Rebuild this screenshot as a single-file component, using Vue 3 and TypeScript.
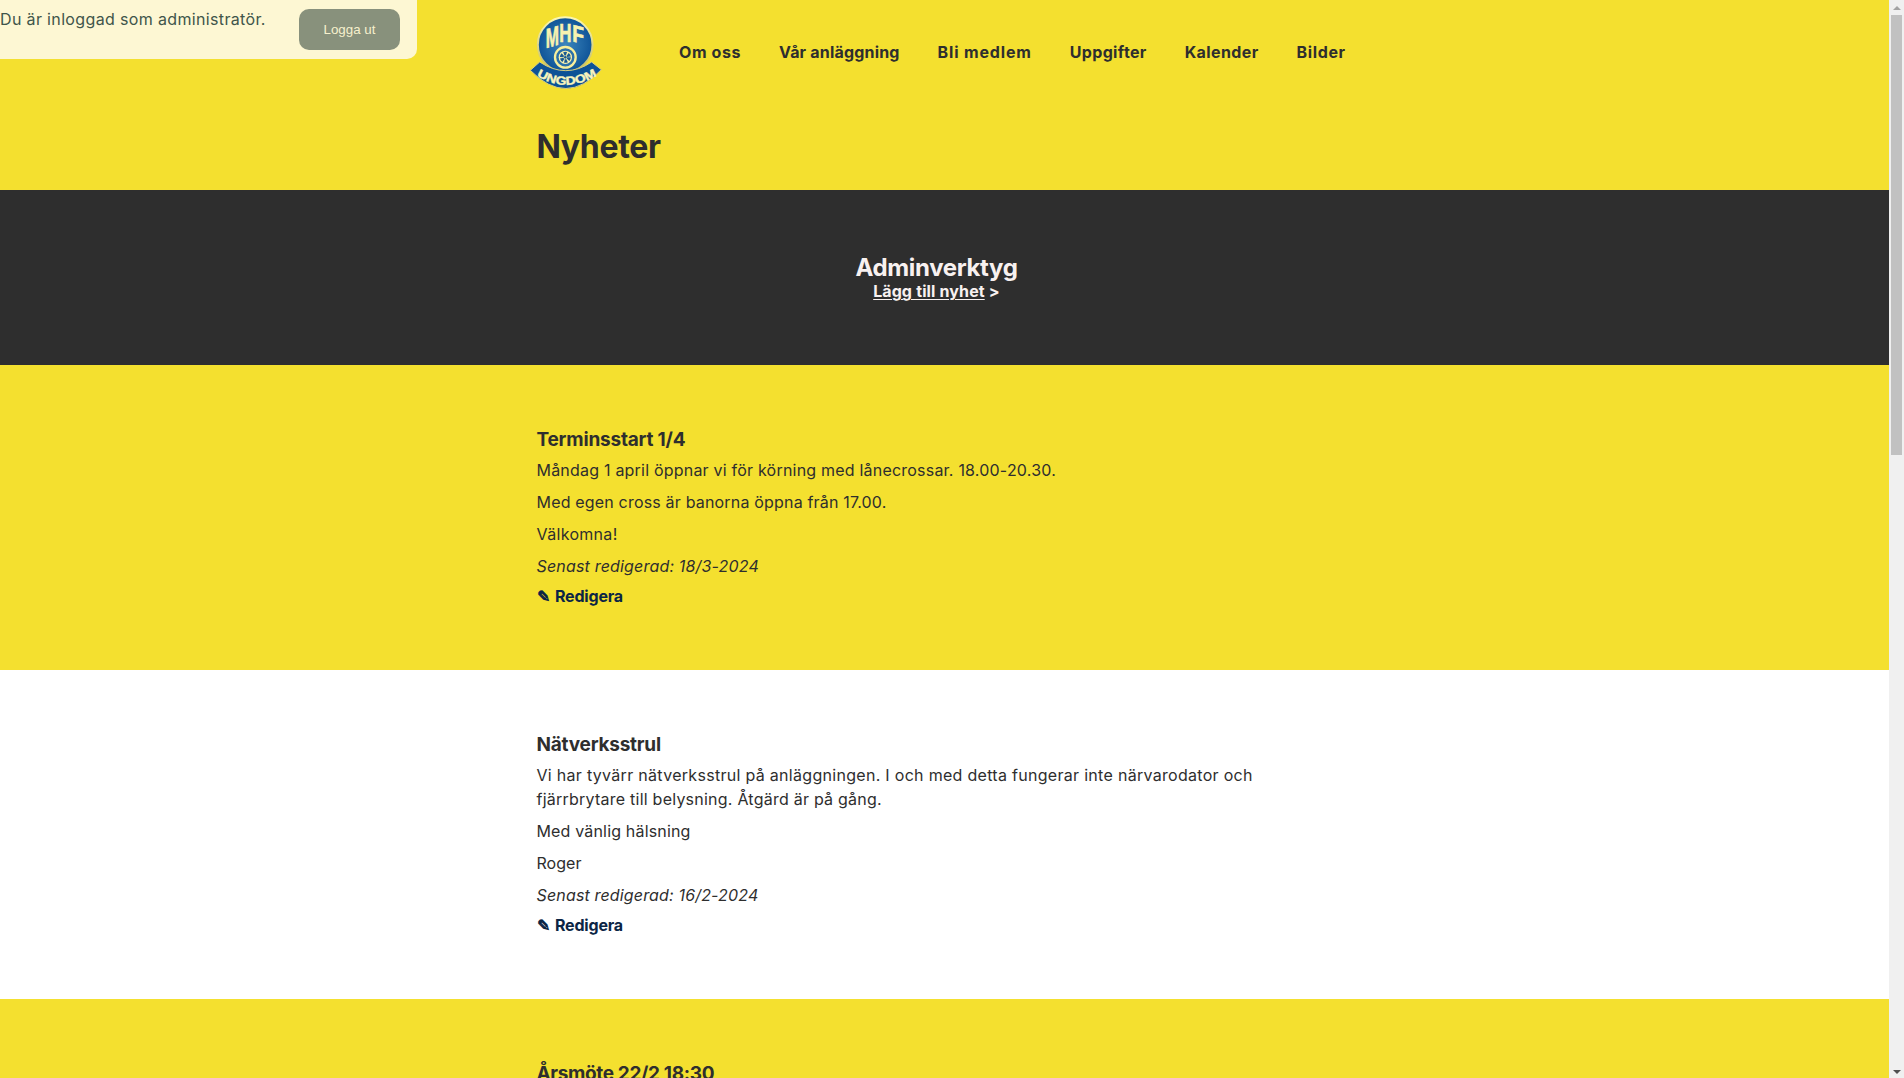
<script setup lang="ts">
interface Line {
  text: string
  tracking: number
}

interface Article {
  title: Line
  paragraphs: Line[][]
  edited: Line
}

const nav: Line[] = [
  { text: 'Om oss', tracking: 0.6 },
  { text: 'Vår anläggning', tracking: 0.19 },
  { text: 'Bli medlem', tracking: 0.85 },
  { text: 'Uppgifter', tracking: 0.36 },
  { text: 'Kalender', tracking: 0.4 },
  { text: 'Bilder', tracking: 0.65 },
]

const articles: Article[] = [
  {
    title: { text: 'Terminsstart 1/4', tracking: -0.2 },
    paragraphs: [
      [{ text: 'Måndag 1 april öppnar vi för körning med lånecrossar. 18.00-20.30.', tracking: 0.21 }],
      [{ text: 'Med egen cross är banorna öppna från 17.00.', tracking: 0.18 }],
      [{ text: 'Välkomna!', tracking: 0.3 }],
    ],
    edited: { text: 'Senast redigerad: 18/3-2024', tracking: 0.18 },
  },
  {
    title: { text: 'Nätverksstrul', tracking: -0.22 },
    paragraphs: [
      [
        { text: 'Vi har tyvärr nätverksstrul på anläggningen. I och med detta fungerar inte närvarodator och', tracking: 0.297 },
        { text: 'fjärrbrytare till belysning. Åtgärd är på gång.', tracking: 0.235 },
      ],
      [{ text: 'Med vänlig hälsning', tracking: 0.17 }],
      [{ text: 'Roger', tracking: 0.05 }],
    ],
    edited: { text: 'Senast redigerad: 16/2-2024', tracking: 0.16 },
  },
  {
    title: { text: 'Årsmöte 22/2 18:30', tracking: -0.35 },
    paragraphs: [],
    edited: { text: 'Senast redigerad: 8/2-2024', tracking: 0.16 },
  },
]

const spacing = (line: Line) => ({ letterSpacing: `${line.tracking}px` })
</script>

<template>
  <div class="window">
    <div class="page">
      <header class="top">
        <div class="inner">
          <div class="menu">
            <svg class="logo" width="74" height="80" viewBox="25 37 222 240" aria-label="MHF Ungdom">
              <defs>
                <radialGradient id="disc" cx="0.5" cy="0.5" r="0.55">
                  <stop offset="0" stop-color="#3c86bd" />
                  <stop offset="1" stop-color="#0a4f94" />
                </radialGradient>
                <linearGradient id="rim" x1="0" y1="0" x2="0" y2="1">
                  <stop offset="0" stop-color="#fbf6b2" />
                  <stop offset="1" stop-color="#c2bb62" />
                </linearGradient>
                <path id="arc" d="M47 225 Q136 280 228 225" />
              </defs>
              <circle cx="133.500" cy="132" r="82" fill="url(#disc)" stroke="url(#rim)" stroke-width="6" />
              <g class="letters" fill="#f8f2b0" stroke="#f8f2b0" stroke-width="2">
                <text transform="translate(75 143) skewY(-16) scale(0.58 1)" font-size="82">M</text>
                <text transform="translate(116 123) scale(0.66 1)" font-size="77">H</text>
                <text transform="translate(155 122) skewY(14) scale(0.8 1)" font-size="72">F</text>
              </g>
              <path d="M29 209 L57 184 Q136 236 213 184 L242 207 Q136 319 29 209Z" fill="#0d5296" stroke="#d6cd80" stroke-width="3" />
              <circle cx="134" cy="170" r="31" fill="#2b70a8" stroke="#f8ef9c" stroke-width="7" />
              <circle cx="134" cy="170" r="20" fill="#f8f2b0" />
              <circle cx="134" cy="170" r="11" fill="none" stroke="#1b5a91" stroke-width="11" stroke-dasharray="8 3.520" />
              <circle cx="134" cy="170" r="4" fill="#1b5a91" />
              <text class="letters" fill="#f8f4bd" stroke="#f8f4bd" stroke-width="1.200" font-size="35">
                <textPath href="#arc" startOffset="1" textLength="192" lengthAdjust="spacingAndGlyphs">UNGDOM</textPath>
              </text>
            </svg>
            <nav>
              <a v-for="item in nav" :key="item.text" :style="spacing(item)">{{ item.text }}</a>
            </nav>
          </div>
          <h1>Nyheter</h1>
        </div>
      </header>

      <section class="admin">
        <div class="inner">
          <h2>Adminverktyg</h2>
          <a class="add"><u>Lägg till nyhet</u> &gt;</a>
        </div>
      </section>

      <section v-for="article in articles" :key="article.title.text" class="article">
        <div class="inner">
          <h3 :style="spacing(article.title)">{{ article.title.text }}</h3>
          <p v-for="(lines, i) in article.paragraphs" :key="i">
            <span v-for="line in lines" :key="line.text" :style="spacing(line)">{{ line.text }}</span>
          </p>
          <p class="edited" :style="spacing(article.edited)">{{ article.edited.text }}</p>
          <a class="edit"><span class="pencil">✎</span>Redigera</a>
        </div>
      </section>
    </div>

    <div class="scrollbar">
      <i class="arrow up"></i>
      <i class="thumb"></i>
      <i class="arrow down"></i>
    </div>

    <aside class="session">
      <span>Du är inloggad som administratör.</span>
      <button type="button">Logga ut</button>
    </aside>
  </div>
</template>

<style>
body {
  margin: 0;
  overflow: hidden;
}
</style>

<style scoped>
.window {
  position: relative;
  display: flex;
  width: 100%;
  height: 1078px;
  overflow: hidden;
  font: 400 16px/24px Inter, 'Open Sans', sans-serif;
  color: #2e2e2e;
  background: #fff;
}

.page {
  flex: 1;
  min-width: 0;
}

.inner {
  width: 800px;
  margin-left: 536.5px;
}

.top {
  height: 190px;
  background: #f4e02f;
}

.menu {
  display: flex;
  align-items: center;
  height: 106px;
  margin-left: -7.5px;
}

.logo {
  display: block;
  flex: none;
}

.letters {
  font-family: 'Liberation Sans', Arial, sans-serif;
  font-weight: 700;
}

nav {
  display: flex;
  gap: 37.9px;
  margin: 0 0 2px 76px;
}

nav a {
  font-weight: 700;
  white-space: nowrap;
}

h1,
h2,
h3,
p {
  margin: 0;
}

h1 {
  margin-top: 22px;
  font-size: 32px;
  line-height: 38px;
  font-weight: 700;
  letter-spacing: -0.35px;
}

.admin {
  box-sizing: border-box;
  height: 175px;
  padding-top: 64px;
  background: #2e2e2e;
  color: #f8f1f0;
  text-align: center;
}

h2 {
  margin-bottom: 1px;
  font-size: 24px;
  line-height: 27px;
  font-weight: 700;
  letter-spacing: -0.35px;
}

.add {
  display: block;
  line-height: 19px;
  font-weight: 700;
  letter-spacing: 0.08px;
  word-spacing: 0.3px;
}

.add u {
  text-underline-offset: 2px;
  text-decoration-thickness: 1px;
}

.article {
  padding: 63px 0 64px;
}

.article:nth-child(odd) {
  background: #f4e02f;
}

.article:nth-child(even) {
  background: #fff;
}

h3 {
  margin-bottom: 7px;
  font-size: 19px;
  line-height: 23px;
  font-weight: 700;
}

p {
  margin-bottom: 8px;
  white-space: nowrap;
}

p span {
  display: block;
}

.edited {
  margin-bottom: 9px;
  font-style: italic;
}

.edit {
  display: flex;
  height: 19px;
  line-height: 19px;
  font-weight: 700;
  letter-spacing: -0.2px;
  color: #0b2545;
}

.pencil {
  width: 18.5px;
}

.scrollbar {
  display: flex;
  flex: none;
  flex-direction: column;
  align-items: center;
  width: 15px;
  background: #f0f0f0;
}

.thumb {
  width: 11px;
  height: 440px;
  margin-top: 5px;
  background: #c1c1c1;
}

.arrow {
  width: 0;
  height: 0;
  border: 4px solid transparent;
}

.up {
  margin-top: 6px;
  border-top: 0;
  border-bottom-color: #a3a3a3;
}

.down {
  margin-top: auto;
  margin-bottom: 4px;
  border-bottom: 0;
  border-top-color: #505050;
}

.session {
  position: absolute;
  top: 0;
  left: 0;
  display: flex;
  justify-content: space-between;
  box-sizing: border-box;
  width: 417px;
  height: 59px;
  padding: 9px 17px 9px 0;
  border-radius: 0 0 10px 0;
  background: #fdf7d3;
  color: #40554a;
}

.session span {
  line-height: 20px;
  letter-spacing: 0.35px;
}

.session button {
  width: 101px;
  height: 41px;
  padding: 0;
  border: 0;
  border-radius: 10px;
  background: #88917c;
  color: #f6f0cd;
  font: 13.333px 'Liberation Sans', Arial, sans-serif;
}
</style>
